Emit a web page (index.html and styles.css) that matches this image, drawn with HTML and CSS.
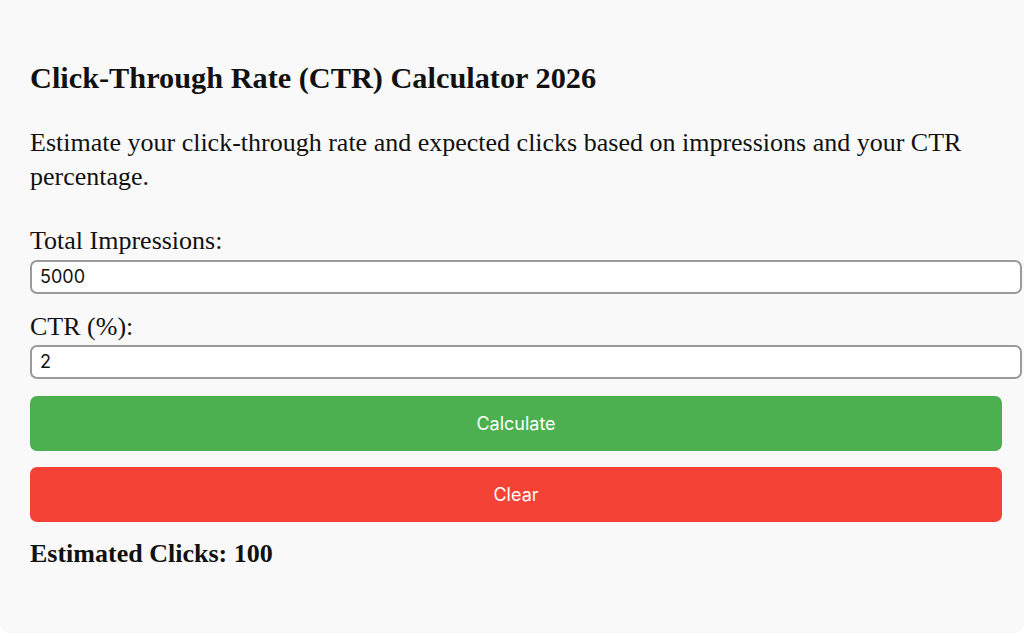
FILE: index.html
```html
<!DOCTYPE html>
<html lang="en">
<head>
  <meta charset="UTF-8">
  <meta name="viewport" content="width=device-width, initial-scale=1.0">
  <title>CTR Calculator 2026</title>
  <link rel="stylesheet" href="styles.css">
</head>
<body>

  <div class="calculator">
    <h1 class="calc-title">Click-Through Rate (CTR) Calculator 2026</h1>
    <p class="calc-intro">Estimate your click-through rate and expected clicks based on impressions and your CTR percentage.</p>

    <label for="impressions" class="field-label">Total Impressions:</label>
    <input type="number" id="impressions" class="field-input" value="5000">

    <label for="ctr" class="field-label">CTR (%):</label>
    <input type="number" id="ctr" class="field-input" value="2">

    <button class="btn btn-calc" id="calc-button">Calculate</button>
    <button class="btn btn-clear" id="clear-button">Clear</button>

    <div class="result" id="result">Estimated Clicks: 100</div>
  </div>

  <script>
    const impressionsInput = document.getElementById('impressions');
    const ctrInput = document.getElementById('ctr');
    const result = document.getElementById('result');

    document.getElementById('calc-button').addEventListener('click', () => {
      const impressions = parseFloat(impressionsInput.value) || 0;
      const ctr = parseFloat(ctrInput.value) || 0;
      result.textContent = 'Estimated Clicks: ' + Math.round(impressions * ctr / 100);
    });

    document.getElementById('clear-button').addEventListener('click', () => {
      impressionsInput.value = '';
      ctrInput.value = '';
      result.textContent = '';
    });
  </script>

</body>
</html>
```

FILE: styles.css
```css
* {
  box-sizing: border-box;
}

body {
  margin: 0;
  background: #ffffff;
  font-family: "Liberation Serif", "Times New Roman", serif;
  color: #111;
}

.calculator {
  background: #f9f9f9;
  border-radius: 0 0 10px 10px;
  padding: 61px 22px 64px 30px;
}

.calc-title {
  margin: 0 0 30px;
  font-size: 30.3px;
  line-height: 1.15;
  font-weight: bold;
}

.calc-intro {
  margin: 0 0 32px;
  font-size: 26px;
  line-height: 1.3;
}

.field-label {
  display: block;
  font-size: 26px;
  line-height: 1.2;
  margin-bottom: 3px;
}

.field-input {
  display: block;
  box-sizing: content-box;
  width: 100%;
  margin: 0 0 17px;
  padding: 4px 8px;
  height: 22px;
  font-family: Inter, "Liberation Sans", sans-serif;
  font-size: 18px;
  color: #111;
  background: #fff;
  border: 2px solid #9a9a9a;
  border-radius: 7px;
  outline: none;
}

.field-input::-webkit-outer-spin-button,
.field-input::-webkit-inner-spin-button {
  -webkit-appearance: none;
  margin: 0;
}

.btn {
  display: block;
  width: 100%;
  height: 55px;
  margin: 0 0 16px;
  border: none;
  border-radius: 7px;
  color: #fff;
  font-family: Inter, "Liberation Sans", sans-serif;
  font-size: 18px;
  cursor: pointer;
}

.btn-calc {
  background-color: #4caf50;
}

.btn-clear {
  background-color: #f44336;
}

.result {
  font-size: 26px;
  line-height: 1.2;
  font-weight: bold;
}
```
